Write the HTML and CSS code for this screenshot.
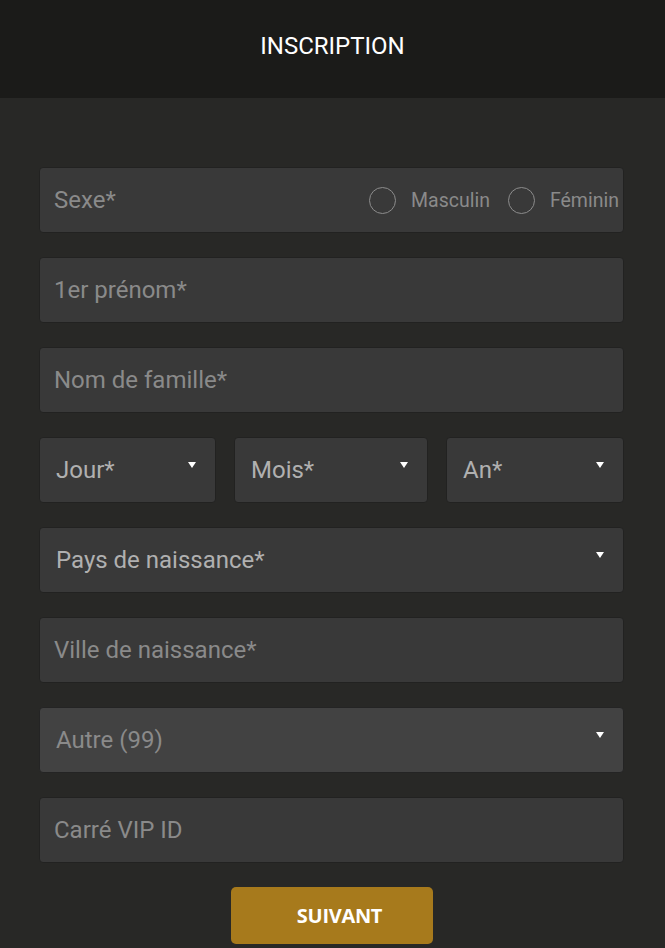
FILE: index.html
```html
<!DOCTYPE html>
<html lang="fr">
<head>
<meta charset="utf-8">
<title>Inscription</title>
<link rel="stylesheet" href="styles.css">
</head>
<body>
<header class="topbar"><h1 class="title">INSCRIPTION</h1></header>
<main class="content">
  <form class="form">
    <div class="field sex">
      <span class="ph">Sexe*</span>
      <div class="radios">
        <label class="radio"><span class="circle"></span>Masculin</label>
        <label class="radio"><span class="circle"></span>Féminin</label>
      </div>
    </div>
    <div class="field"><span class="ph">1er prénom*</span></div>
    <div class="field"><span class="ph">Nom de famille*</span></div>
    <div class="date-row">
      <div class="field select day"><span class="sel">Jour*</span><span class="arrow"></span></div>
      <div class="field select month"><span class="sel">Mois*</span><span class="arrow"></span></div>
      <div class="field select year"><span class="sel">An*</span><span class="arrow"></span></div>
    </div>
    <div class="field select"><span class="sel">Pays de naissance*</span><span class="arrow"></span></div>
    <div class="field"><span class="ph">Ville de naissance*</span></div>
    <div class="field select disabled"><span class="ph sel-ph">Autre (99)</span><span class="arrow"></span></div>
    <div class="field"><span class="ph">Carré VIP ID</span></div>
    <div class="actions"><button type="button" class="btn">SUIVANT</button></div>
  </form>
</main>
</body>
</html>
```
FILE: styles.css
```css
* { box-sizing: border-box; }
html, body { margin: 0; padding: 0; }
body {
  background: #282826;
  font-family: Roboto, "Liberation Sans", sans-serif;
  width: 665px;
  height: 948px;
  overflow: hidden;
}
.topbar {
  background: #1b1b19;
  height: 98px;
  display: flex;
  align-items: center;
  justify-content: center;
}
.title {
  margin: 0;
  color: #ffffff;
  font-weight: 400;
  font-size: 24px;
  padding-bottom: 6px;
}
.content { padding: 69px 41px 0 39px; }
.form { display: flex; flex-direction: column; gap: 24px; }
.field {
  height: 66px;
  background: #393939;
  border: 1px solid #222221;
  border-radius: 4px;
  display: flex;
  align-items: center;
  padding: 0 14px;
  position: relative;
  overflow: hidden;
}
.ph { color: #8a8a8a; font-size: 24px; white-space: nowrap; }
.sel { color: #b0b0b0; font-size: 24px; padding-left: 2px; white-space: nowrap; }
.sel-ph { padding-left: 2px; }
.sex { justify-content: space-between; padding-right: 4px; }
.radios { display: flex; gap: 18px; }
.radio {
  display: flex;
  align-items: center;
  gap: 15px;
  color: #8a8a8a;
  font-size: 19.5px;
  white-space: nowrap;
}
.circle {
  width: 27px;
  height: 27px;
  border: 1px solid #8c8c8c;
  border-radius: 50%;
}
.date-row { display: flex; gap: 18px; }
.day { width: 177px; }
.month { width: 194px; }
.year { width: 178px; }
.arrow {
  position: absolute;
  right: 19px;
  top: 24px;
  width: 0;
  height: 0;
  border-left: 4px solid transparent;
  border-right: 4px solid transparent;
  border-top: 6px solid #ffffff;
}
.disabled { background: #424242; border-color: #242424; }
.actions { display: flex; justify-content: center; }
.btn {
  width: 202px;
  height: 57px;
  background: #a77a1c;
  color: #ffffff;
  border: none;
  border-radius: 5px;
  padding: 0 0 0 16px;
  font-family: "Open Sans", "Liberation Sans", sans-serif;
  font-weight: 700;
  font-size: 20px;
  letter-spacing: -0.3px;
}
```
